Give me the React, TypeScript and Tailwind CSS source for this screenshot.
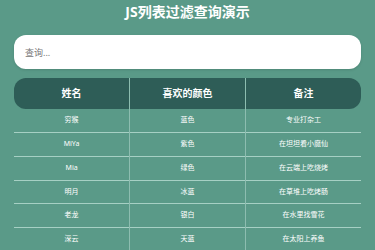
const rows = [
  { name: "穷猴", color: "蓝色", note: "专业打杂工" },
  { name: "MiYa", color: "紫色", note: "在坦坦看小魔仙" },
  { name: "Mia", color: "绿色", note: "在云端上吃烧烤" },
  { name: "明月", color: "冰蓝", note: "在草堆上吃烤肠" },
  { name: "老龙", color: "银白", note: "在水里找雪花" },
  { name: "深云", color: "天蓝", note: "在太阳上养鱼" },
];

const font = {
  fontFamily: '"Noto Sans", "Noto Sans CJK SC", sans-serif',
};

export default function App() {
  return (
    <div
      className="h-[250px] w-[375px] overflow-hidden bg-[#5a9a88] px-[14px]"
      style={font}
    >
      <h1 className="pt-[2px] text-center text-[14px] font-bold leading-[20px] text-white">
        JS列表过滤查询演示
      </h1>
      <input
        type="text"
        placeholder="查询..."
        className="mt-[13px] block h-[34px] w-full rounded-[12px] bg-white px-[11px] text-[9px] text-gray-700 shadow-sm outline-none placeholder:text-[#777]"
      />
      <table className="mt-[9px] w-full table-fixed border-collapse">
        <thead>
          <tr className="text-white">
            <th className="h-[31px] rounded-l-[12px] border-r border-[#8dbdb0] bg-[#2e5d57] text-[10px] font-bold">
              姓名
            </th>
            <th className="h-[31px] border-r border-[#8dbdb0] bg-[#2e5d57] text-[10px] font-bold">
              喜欢的颜色
            </th>
            <th className="h-[31px] rounded-r-[12px] bg-[#2e5d57] text-[10px] font-bold">
              备注
            </th>
          </tr>
        </thead>
        <tbody>
          {rows.map((r) => (
            <tr
              key={r.name}
              className="border-b border-[#a6d0c4] text-[7px] text-white"
            >
              <td className="h-[23.7px] border-r border-[#8dbdb0] text-center">
                {r.name}
              </td>
              <td className="h-[23.7px] border-r border-[#8dbdb0] text-center">
                {r.color}
              </td>
              <td className="h-[23.7px] text-center">{r.note}</td>
            </tr>
          ))}
        </tbody>
      </table>
    </div>
  );
}
